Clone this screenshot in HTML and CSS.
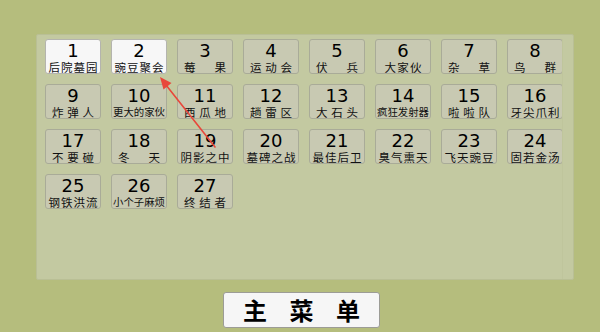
FILE: index.html
```html
<!DOCTYPE html>
<html lang="zh">
<head>
<meta charset="utf-8">
<title>关卡选择</title>
<link rel="stylesheet" href="styles.css">
</head>
<body>
<div class="panel">
  <div class="clip">
    <div class="grid">
      <div class="lv sel"><div class="num">1</div><div class="lab"><span>后</span><span>院</span><span>墓</span><span>园</span></div></div>
      <div class="lv sel"><div class="num">2</div><div class="lab"><span>豌</span><span>豆</span><span>聚</span><span>会</span></div></div>
      <div class="lv"><div class="num">3</div><div class="lab s"><span>莓</span><span>果</span></div></div>
      <div class="lv"><div class="num">4</div><div class="lab s"><span>运</span><span>动</span><span>会</span></div></div>
      <div class="lv"><div class="num">5</div><div class="lab s"><span>伏</span><span>兵</span></div></div>
      <div class="lv"><div class="num">6</div><div class="lab t"><span>大</span><span>家</span><span>伙</span></div></div>
      <div class="lv"><div class="num">7</div><div class="lab s"><span>杂</span><span>草</span></div></div>
      <div class="lv"><div class="num">8</div><div class="lab s"><span>鸟</span><span>群</span></div></div>

      <div class="lv"><div class="num">9</div><div class="lab s"><span>炸</span><span>弹</span><span>人</span></div></div>
      <div class="lv"><div class="num">10</div><div class="lab f"><span>更</span><span>大</span><span>的</span><span>家</span><span>伙</span></div></div>
      <div class="lv"><div class="num">11</div><div class="lab s"><span>西</span><span>瓜</span><span>地</span></div></div>
      <div class="lv"><div class="num">12</div><div class="lab s"><span>趟</span><span>雷</span><span>区</span></div></div>
      <div class="lv"><div class="num">13</div><div class="lab s"><span>大</span><span>石</span><span>头</span></div></div>
      <div class="lv"><div class="num">14</div><div class="lab f"><span>疯</span><span>狂</span><span>发</span><span>射</span><span>器</span></div></div>
      <div class="lv"><div class="num">15</div><div class="lab s"><span>啦</span><span>啦</span><span>队</span></div></div>
      <div class="lv"><div class="num">16</div><div class="lab"><span>牙</span><span>尖</span><span>爪</span><span>利</span></div></div>

      <div class="lv"><div class="num">17</div><div class="lab s"><span>不</span><span>要</span><span>碰</span></div></div>
      <div class="lv"><div class="num">18</div><div class="lab s"><span>冬</span><span>天</span></div></div>
      <div class="lv"><div class="num">19</div><div class="lab"><span>阴</span><span>影</span><span>之</span><span>中</span></div></div>
      <div class="lv"><div class="num">20</div><div class="lab"><span>墓</span><span>碑</span><span>之</span><span>战</span></div></div>
      <div class="lv"><div class="num">21</div><div class="lab"><span>最</span><span>佳</span><span>后</span><span>卫</span></div></div>
      <div class="lv"><div class="num">22</div><div class="lab"><span>臭</span><span>气</span><span>熏</span><span>天</span></div></div>
      <div class="lv"><div class="num">23</div><div class="lab"><span>飞</span><span>天</span><span>豌</span><span>豆</span></div></div>
      <div class="lv"><div class="num">24</div><div class="lab"><span>固</span><span>若</span><span>金</span><span>汤</span></div></div>

      <div class="lv"><div class="num">25</div><div class="lab"><span>钢</span><span>铁</span><span>洪</span><span>流</span></div></div>
      <div class="lv"><div class="num">26</div><div class="lab f"><span>小</span><span>个</span><span>子</span><span>麻</span><span>烦</span></div></div>
      <div class="lv"><div class="num">27</div><div class="lab s"><span>终</span><span>结</span><span>者</span></div></div>
    </div>
  </div>
</div>
<div class="footer">
  <div class="menu">主 菜 单</div>
</div>
<svg class="arrow" width="600" height="332" viewBox="0 0 600 332">
  <line x1="215" y1="147" x2="166" y2="85" stroke="#e8473b" stroke-width="1.6" stroke-linecap="round"/>
  <polygon points="160,77 171.5,83 163.5,89.5" fill="#e8473b"/>
</svg>
</body>
</html>
```

FILE: styles.css
```css
html, body {
  margin: 0;
  padding: 0;
}
body {
  width: 600px;
  height: 332px;
  background: #b5bd7d;
  font-family: "DejaVu Sans", "Noto Sans CJK SC", sans-serif;
  position: relative;
  overflow: hidden;
}
.panel {
  box-sizing: border-box;
  margin: 34px 0 0 36px;
  width: 538px;
  height: 246px;
  background: #c3c9a1;
  border: 1px solid #b9bf95;
  border-radius: 2px;
  padding: 4px 0 0 8px;
}
.clip {
  width: 517px;
  height: 240px;
  overflow: hidden;
  border-right: 1px solid #bfc59c;
}
.grid {
  display: grid;
  grid-template-columns: repeat(8, 56px);
  grid-auto-rows: 35px;
  column-gap: 10px;
  row-gap: 10px;
  width: 600px;
}
.lv {
  box-sizing: border-box;
  border: 1px solid #a9ab98;
  border-radius: 3px;
  background: #c8c9b2;
  display: flex;
  flex-direction: column;
  align-items: center;
  color: #000;
}
.lv.sel {
  background: #f7f7f7;
  border-color: #b4b4ae;
}
.num {
  font-size: 18px;
  line-height: 19px;
  margin-top: 1px;
}
.lab {
  display: flex;
  justify-content: space-between;
  width: 49px;
  font-family: "Noto Sans CJK SC", sans-serif;
  font-size: 11.5px;
  line-height: 12px;
  margin-top: 1px;
  color: #111;
}
.lab.s {
  width: 42px;
}
.lab.t {
  width: 37px;
}
.lab.f {
  width: 52px;
  font-size: 10.4px;
}
.footer {
  margin: 12px 0 0 223px;
}
.menu {
  box-sizing: border-box;
  width: 157px;
  height: 36px;
  background: #f6f6f6;
  border: 1px solid #9c9c96;
  border-radius: 3px;
  font-family: "Noto Sans CJK SC", sans-serif;
  font-size: 24px;
  font-weight: bold;
  line-height: 33px;
  text-align: center;
  word-spacing: 17px;
  color: #000;
}
.arrow {
  position: absolute;
  left: 0;
  top: 0;
  pointer-events: none;
}
```
